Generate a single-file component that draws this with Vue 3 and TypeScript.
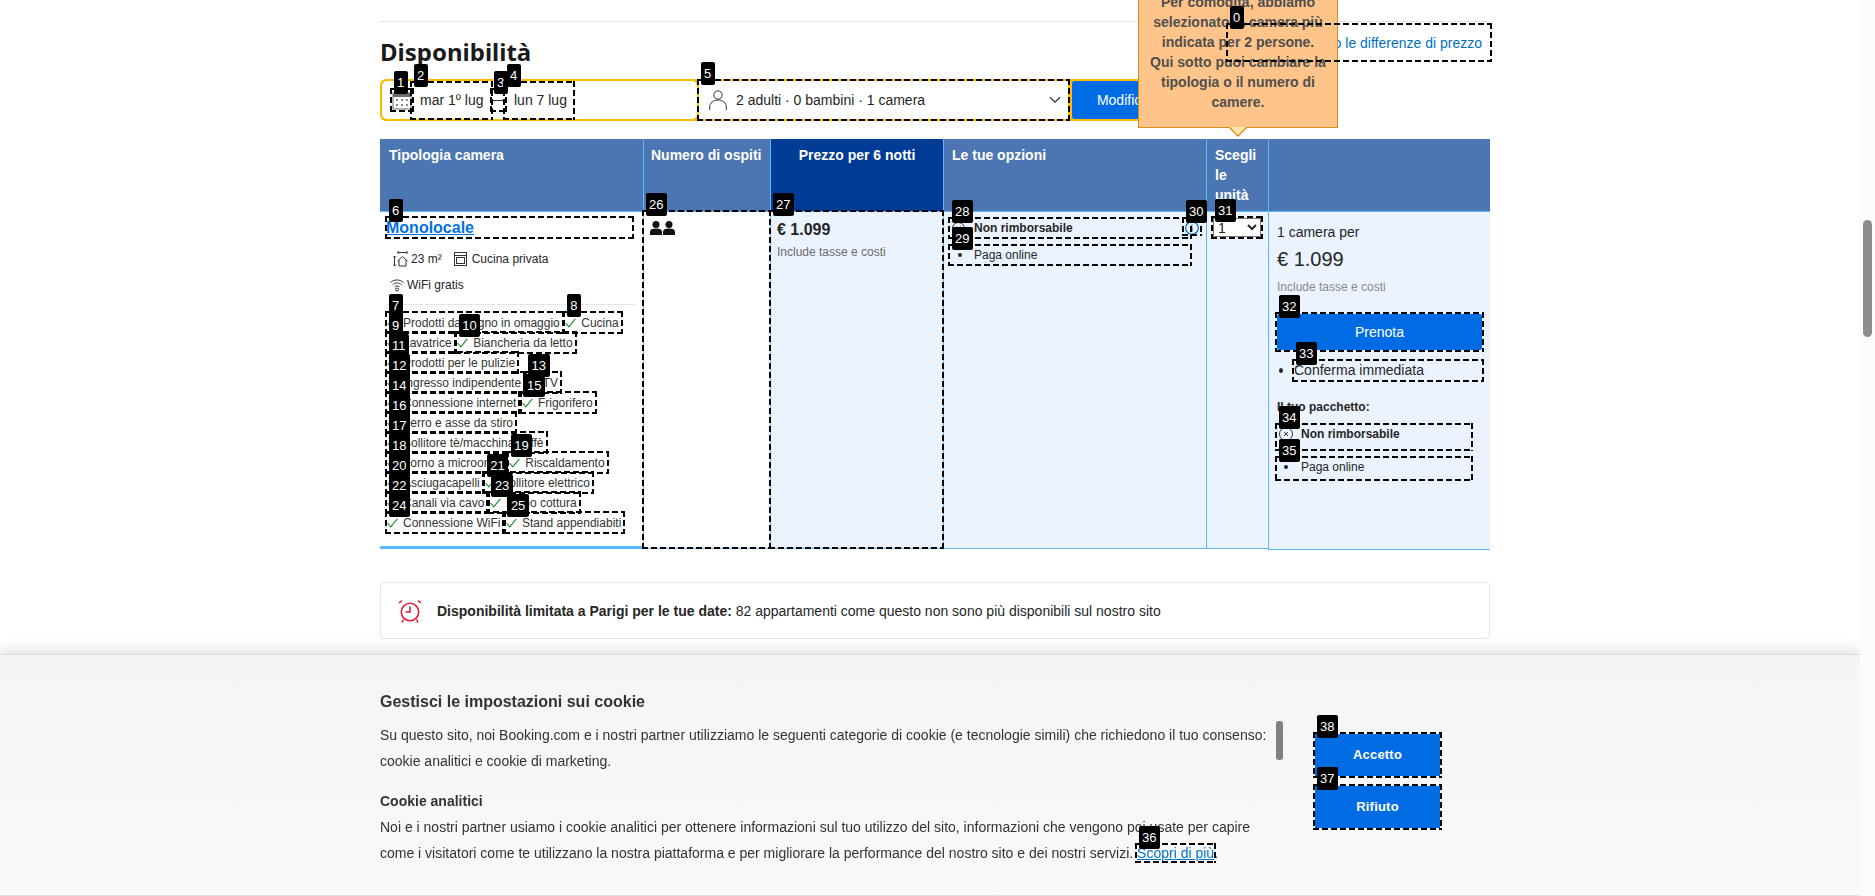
<script setup lang="ts">
interface Amenity {
  id: number
  label: string
}

const amenities: Amenity[] = [
  { id: 7, label: 'Prodotti da bagno in omaggio' },
  { id: 8, label: 'Cucina' },
  { id: 9, label: 'Lavatrice' },
  { id: 10, label: 'Biancheria da letto' },
  { id: 11, label: 'Prodotti per le pulizie' },
  { id: 12, label: 'Ingresso indipendente' },
  { id: 13, label: 'TV' },
  { id: 14, label: 'Connessione internet' },
  { id: 15, label: 'Frigorifero' },
  { id: 16, label: 'Ferro e asse da stiro' },
  { id: 17, label: 'Bollitore tè/macchina caffè' },
  { id: 18, label: 'Forno a microonde' },
  { id: 19, label: 'Riscaldamento' },
  { id: 20, label: 'Asciugacapelli' },
  { id: 21, label: 'Bollitore elettrico' },
  { id: 22, label: 'Canali via cavo' },
  { id: 23, label: 'Piano cottura' },
  { id: 24, label: 'Connessione WiFi' },
  { id: 25, label: 'Stand appendiabiti' },
]
</script>

<template>
  <div class="page">
    <div class="rule"></div>

    <div class="heading-row">
      <h2 class="heading">Disponibilità</h2>
      <a class="price-link marked"><i class="frame"><b>0</b></i>Perché vedo le differenze di prezzo</a>
    </div>

    <div class="search">
      <div class="dates">
        <span class="cal marked">
          <i class="frame"><b>1</b></i>
          <svg width="20" height="20" viewBox="0 0 20 20">
            <rect x="1" y="3" width="18" height="16" fill="#fff" stroke="#6b6b6b" />
            <rect x="1" y="3" width="18" height="4" fill="#6b6b6b" />
            <g fill="#8a8a8a">
              <rect x="4" y="9" width="2" height="2" /><rect x="9" y="9" width="2" height="2" /><rect x="14" y="9" width="2" height="2" />
              <rect x="4" y="14" width="2" height="2" /><rect x="9" y="14" width="2" height="2" /><rect x="14" y="14" width="2" height="2" />
            </g>
          </svg>
        </span>
        <span class="date date--in marked"><i class="frame"><b>2</b></i>mar 1º lug</span>
        <span class="dash marked"><i class="frame"><b>3</b></i></span>
        <span class="date date--out marked"><i class="frame"><b>4</b></i>lun 7 lug</span>
      </div>
      <div class="guests marked">
        <i class="frame"><b>5</b></i>
        <svg class="guests__icon" width="18" height="20" viewBox="0 0 18 20" fill="none" stroke="#333" stroke-width="1">
          <circle cx="9" cy="5" r="4.2" />
          <path d="M.7 20v-3c0-4 3.6-7 8.3-7s8.3 3 8.3 7v3" />
        </svg>
        <span class="guests__label">2 adulti · 0 bambini · 1 camera</span>
        <svg width="12" height="8" viewBox="0 0 12 8" fill="none" stroke="#333" stroke-width="1.3">
          <path d="M1 1.2l5 5 5-5" />
        </svg>
      </div>
      <button class="search__btn">Modifica</button>
    </div>

    <div class="tooltip">
      Per comodità, abbiamo selezionato la camera più indicata per 2 persone.<br />
      Qui sotto puoi cambiare la tipologia o il numero di camere.
      <span class="tooltip__tip"></span>
    </div>

    <div class="table">
      <div class="th">Tipologia camera</div>
      <div class="th th--nowrap">Numero di ospiti</div>
      <div class="th th--price">Prezzo per 6 notti<span class="th__arrow"></span></div>
      <div class="th">Le tue opzioni</div>
      <div class="th">Scegli le unità</div>
      <div class="th"></div>

      <div class="td td--room">
        <div class="room-name marked"><i class="frame"><b>6</b></i><a>Monolocale</a></div>
        <div class="facts facts--first">
          <svg width="15" height="16" viewBox="0 0 15 16" fill="none" stroke="#333">
            <path d="M1.5 5v10M0 6.500l1.500-1.500 1.500 1.500M0 13.500l1.500 1.500 1.500-1.500M5 1.500h9M5 0v3M14 0v3" />
            <path d="M4.500 10l5-4.500 5 4.500M6 9v6h7V9" />
          </svg>
          <span>23 m²</span>
          <svg class="facts__oven" width="13" height="14" viewBox="0 0 13 14" fill="none" stroke="#333">
            <rect x=".5" y=".5" width="12" height="13" />
            <path d="M.5 3.500h12" />
            <rect x="2.500" y="5.500" width="8" height="6" />
          </svg>
          <span>Cucina privata</span>
        </div>
        <div class="facts facts--wifi">
          <svg width="14" height="14" viewBox="0 0 14 14" fill="none" stroke="#333">
            <path d="M.5 4.500c3.600-3.400 9.400-3.400 13 0M2.500 6.700c2.500-2.300 6.500-2.300 9 0M4.500 8.800c1.400-1.200 3.600-1.200 5 0" />
            <circle cx="7" cy="11.500" r="1.500" />
          </svg>
          <span>WiFi gratis</span>
        </div>
        <div class="room-rule"></div>
        <div class="amenities">
          <span v-for="item in amenities" :key="item.id" class="amenity marked">
            <i class="frame"><b>{{ item.id }}</b></i>
            <svg width="11" height="10" viewBox="0 0 11 10" fill="none" stroke="#1d8a2b" stroke-width="1.100">
              <path d="M.6 5l3.200 3.800L10.300.8" />
            </svg>
            <span>{{ item.label }}</span>
          </span>
        </div>
      </div>

      <div class="td td--guests marked">
        <i class="frame frame--cell"><b>26</b></i>
        <svg width="25" height="14" viewBox="0 0 25 14" fill="#111">
          <circle cx="6" cy="3.500" r="3.500" />
          <path d="M0 14v-3c0-2.500 2-3.500 6-3.500s6 1 6 3.500v3z" />
          <circle cx="19" cy="3.500" r="3.500" />
          <path d="M13 14v-3c0-2.500 2-3.500 6-3.500s6 1 6 3.500v3z" />
        </svg>
      </div>

      <div class="td td--blue td--price marked">
        <i class="frame frame--cell"><b>27</b></i>
        <div class="price">€ 1.099</div>
        <div class="taxes">Include tasse e costi</div>
      </div>

      <div class="td td--blue td--options">
        <div class="option-row">
          <div class="option option--main marked">
            <i class="frame"><b>28</b></i>
            <svg class="option__x" width="13" height="13" viewBox="0 0 13 13" fill="none" stroke="#333">
              <circle cx="6.500" cy="6.500" r="6" /><path d="M4.500 4.500l4 4M8.500 4.500l-4 4" />
            </svg>
            <strong>Non rimborsabile</strong>
          </div>
          <span class="info marked">
            <i class="frame"><b>30</b></i>
            <svg width="14" height="14" viewBox="0 0 14 14" fill="none" stroke="#0071c2" stroke-width="1.200">
              <circle cx="7" cy="7" r="6.300" /><path d="M7 6v4.500M7 3.500v1.200" />
            </svg>
          </span>
        </div>
        <div class="option option--sub marked">
          <i class="frame"><b>29</b></i>
          <span class="dot"></span>Paga online
        </div>
      </div>

      <div class="td td--blue td--units">
        <div class="units marked">
          <i class="frame"><b>31</b></i>
          <select class="units__select"><option>1</option></select>
        </div>
      </div>

      <div class="td td--blue td--summary">
        <div class="summary__rooms">1 camera per</div>
        <div class="summary__total">€ 1.099</div>
        <div class="summary__taxes">Include tasse e costi</div>
        <button class="book marked"><i class="frame"><b>32</b></i>Prenota</button>
        <div class="confirm">
          <span class="dot dot--big"></span>
          <span class="confirm__text marked"><i class="frame"><b>33</b></i>Conferma immediata</span>
        </div>
        <div class="package-title">Il tuo pacchetto:</div>
        <div class="package package--main marked">
          <i class="frame"><b>34</b></i>
          <svg width="14" height="14" viewBox="0 0 14 14" fill="none" stroke="#333">
            <circle cx="7" cy="7" r="6.500" /><path d="M5 5l4 4M9 5l-4 4" />
          </svg>
          <strong>Non rimborsabile</strong>
        </div>
        <div class="package package--sub marked">
          <i class="frame"><b>35</b></i>
          <span class="dot"></span>Paga online
        </div>
      </div>
    </div>

    <div class="notice">
      <svg width="24" height="24" viewBox="0 0 24 24" fill="none" stroke="#e21c3c" stroke-width="1.600">
        <circle cx="12" cy="13" r="8.700" />
        <path d="M12 7.500V13H7.500M5.500 20.500L4 23.500M18.500 20.500l1.500 3M1 4l3-2.500M23 4l-3-2.500" />
      </svg>
      <p class="notice__text">
        <strong>Disponibilità limitata a Parigi per le tue date:</strong>
        82 appartamenti come questo non sono più disponibili sul nostro sito
      </p>
    </div>
  </div>

  <div class="cookie">
    <div class="cookie__inner">
      <div class="cookie__copy">
        <h3 class="cookie__title">Gestisci le impostazioni sui cookie</h3>
        <p class="cookie__text">
          Su questo sito, noi Booking.com e i nostri partner utilizziamo le seguenti categorie di cookie (e tecnologie simili) che richiedono il tuo consenso: cookie analitici e cookie di marketing.
        </p>
        <h4 class="cookie__sub">Cookie analitici</h4>
        <p class="cookie__text">
          Noi e i nostri partner usiamo i cookie analitici per ottenere informazioni sul tuo utilizzo del sito, informazioni che vengono poi usate per capire come i visitatori come te utilizzano la nostra piattaforma e per migliorare la performance del nostro sito e dei nostri servizi.
          <a class="cookie__link marked"><i class="frame"><b>36</b></i>Scopri di più</a>.
        </p>
      </div>
      <div class="cookie__thumb"></div>
      <div class="cookie__actions">
        <button class="cookie__btn marked"><i class="frame"><b>38</b></i>Accetto</button>
        <button class="cookie__btn marked"><i class="frame"><b>37</b></i>Rifiuto</button>
      </div>
    </div>
  </div>

  <div class="scrollbar"><div class="scrollbar__thumb"></div></div>
</template>

<style>
html,
body {
  height: 100%;
  overflow: hidden;
  background: #fff;
}
</style>

<style scoped>
.page {
  position: relative;
  width: 1110px;
  margin-left: 380px;
  font-family: "Liberation Sans", Arial, sans-serif;
  color: #262626;
  font-size: 14px;
  padding-top: 21px;
}

.marked {
  position: relative;
}

/* dashed box, 6 on 3 off, drawn over everything below it */
.frame {
  position: absolute;
  inset: -2px;
  z-index: 50;
  pointer-events: none;
  font-style: normal;
  background:
    repeating-linear-gradient(90deg, #000 0 6px, transparent 6px 9px) top / 100% 2px no-repeat,
    repeating-linear-gradient(90deg, #000 0 6px, transparent 6px 9px) bottom / 100% 2px no-repeat,
    repeating-linear-gradient(180deg, #000 0 6px, transparent 6px 9px) left / 2px 100% no-repeat,
    repeating-linear-gradient(180deg, #000 0 6px, transparent 6px 9px) right / 2px 100% no-repeat;
}

.frame--cell {
  inset: -2px -1px -1px -2px;
}

.frame b {
  position: absolute;
  left: 3.5px;
  top: -17px;
  height: 23px;
  padding: 0 3.5px;
  background: #000;
  color: #fff;
  border-radius: 2px;
  font: 400 13px/23px "Liberation Sans", Arial, sans-serif;
  letter-spacing: 0;
}

.rule {
  height: 1px;
  background: #e6e6e6;
}

.heading-row {
  display: flex;
  justify-content: space-between;
  align-items: flex-start;
  height: 57px;
  padding-top: 3px;
  box-sizing: border-box;
}

.heading {
  margin: 10px 0 0;
  font: 700 24px/34px "Noto Sans", "Open Sans", sans-serif;
  color: #1a1a1a;
}

.price-link {
  display: block;
  width: 262px;
  height: 35px;
  box-sizing: border-box;
  text-align: right;
  padding-right: 8px;
  font-size: 14px;
  line-height: 36px;
  color: #0071c2;
}

.search {
  display: flex;
  gap: 2px;
  width: fit-content;
  height: 42px;
  box-sizing: border-box;
  padding: 2px;
  background: #febb02;
  border-radius: 6px;
}

.dates {
  display: flex;
  align-items: center;
  width: 315px;
  box-sizing: border-box;
  padding-left: 10px;
  background: #fff;
  border-radius: 5px;
}

.cal {
  display: block;
  width: 20px;
  height: 20px;
}

.cal svg {
  display: block;
}

.date {
  display: block;
  height: 35px;
  line-height: 35px;
  box-sizing: border-box;
}

.date--in {
  width: 79px;
  padding-left: 8px;
}

.date--out {
  width: 68px;
  padding-left: 9px;
}

.dash {
  display: block;
  width: 13px;
  height: 20px;
  margin-left: 1px;
  background: linear-gradient(#333, #333) center / 13px 1px no-repeat;
}

.guests {
  display: flex;
  align-items: center;
  width: 369px;
  box-sizing: border-box;
  padding: 0 7px 0 10px;
  background: #fff;
}

.guests__label {
  flex: 1;
  margin-left: 9px;
}

.search__btn {
  width: 102px;
  margin-left: 2px;
  border: 0;
  border-radius: 3px;
  background: #006ce4;
  color: #fff;
  font: 400 14px "Liberation Sans", Arial, sans-serif;
}

.tooltip {
  position: absolute;
  left: 758px;
  top: -25px;
  width: 200px;
  box-sizing: border-box;
  padding: 16px 8px 15px;
  background: #ffc48a;
  border: 1px solid #d98f1b;
  text-align: center;
  font-weight: 700;
  font-size: 14px;
  line-height: 20px;
  color: #4f4f4f;
  z-index: 20;
}

.tooltip__tip {
  position: absolute;
  left: 50%;
  top: 100%;
  margin-left: -9px;
  margin-top: 1px;
  border: solid transparent;
  border-width: 9px 9px 0;
  border-top-color: #d98f1b;
}

.tooltip__tip::after {
  content: "";
  position: absolute;
  left: -8px;
  top: -10px;
  border: solid transparent;
  border-width: 8px 8px 0;
  border-top-color: #ffe6a8;
}

.table {
  display: grid;
  grid-template-columns: 263px 127px 173px 263px 62px 222px;
  grid-template-rows: 73px 337px;
  margin-top: 18px;
}

.th {
  position: relative;
  background: #4c76b2;
  color: #fff;
  font-weight: 700;
  font-size: 14px;
  line-height: 20px;
  padding: 6px 8px 0;
  border-left: 1px solid #5bbaff;
  border-bottom: 1px solid #5bbaff;
  box-sizing: border-box;
  overflow: hidden;
}

.th:first-child {
  padding-left: 9px;
  border-left: 0;
}

.th--nowrap {
  white-space: nowrap;
  padding-left: 7px;
  padding-right: 0;
}

.th--price {
  background: #003b95;
  text-align: center;
  overflow: visible;
}

.th__arrow {
  position: absolute;
  left: 50%;
  bottom: -10px;
  margin-left: -9px;
  border: solid transparent;
  border-width: 9px 9px 0;
  border-top-color: #003b95;
}

.td {
  box-sizing: border-box;
  border-left: 1px solid #5bbaff;
  border-bottom: 1px solid #5bbaff;
}

.td--blue {
  background: #ebf3ff;
}

.td--room {
  border-left: 0;
  border-bottom: 3px solid #5bbaff;
  padding: 6px 11px 0 7px;
  font-size: 12px;
}

.room-name {
  height: 19px;
  line-height: 19px;
  font-size: 16px;
  font-weight: 700;
}

.room-name a {
  margin-left: -1px;
  color: #0071e2;
  text-decoration: underline;
}

.facts {
  display: flex;
  align-items: center;
  height: 16px;
}

.facts--first {
  margin-top: 14px;
  padding-left: 6px;
  gap: 3px;
}

.facts__oven {
  margin-left: 9px;
  margin-right: 2px;
}

.facts--wifi {
  margin-top: 10px;
  padding-left: 3px;
  gap: 3px;
}

.room-rule {
  height: 1px;
  margin: 11px -3px 0 -2px;
  background: #e6e6e6;
}

.amenities {
  display: flex;
  flex-wrap: wrap;
  gap: 1px 3.5px;
  margin-top: 8px;
}

.amenity {
  display: inline-flex;
  align-items: center;
  height: 19px;
  padding-right: 2px;
  white-space: nowrap;
  color: #333;
}

.amenity svg {
  margin-right: 5px;
}

.td--guests {
  padding: 9px 0 0 6px;
}

.td--price {
  padding: 8px 0 0 6px;
}

.price {
  font-size: 16px;
  font-weight: 700;
  line-height: 20px;
}

.taxes {
  margin-top: 5px;
  font-size: 12px;
  line-height: 14px;
  color: #6b6b6b;
}

.td--options {
  padding: 7px 0 0 6px;
  font-size: 12px;
}

.option-row {
  display: flex;
  align-items: flex-start;
}

.option {
  display: flex;
  align-items: center;
  width: 240px;
  height: 18px;
  box-sizing: border-box;
  flex: none;
}

.option__x {
  margin: 0 9px 0 2px;
}

.option--sub {
  margin-top: 9px;
  padding-left: 8px;
}

.dot {
  display: block;
  width: 4px;
  height: 4px;
  border-radius: 50%;
  background: #262626;
  margin-right: 12px;
}

.info {
  display: block;
  width: 16px;
  height: 15px;
  margin-left: -6px;
  text-align: center;
}

.info svg {
  display: block;
  margin: 2px 0 0 1px;
}

.td--units {
  padding: 6px 0 0 6px;
}

.units {
  width: 48px;
  height: 19px;
}

.units__select {
  display: block;
  width: 48px;
  height: 19px;
  box-sizing: border-box;
  background: #fff;
  border: 1px solid #767676;
  border-radius: 0;
  font: 400 14px "Liberation Sans", Arial, sans-serif;
  color: #262626;
  padding: 0;
}

.td--summary {
  margin-bottom: -1px;
  padding: 10px 8px 0 8px;
  font-size: 14px;
}

.summary__rooms {
  line-height: 20px;
}

.summary__total {
  margin-top: 5px;
  font-size: 20px;
  line-height: 24px;
}

.summary__taxes {
  margin-top: 9px;
  font-size: 12px;
  line-height: 14px;
  color: #8a8a8a;
}

.book {
  display: block;
  width: 205px;
  height: 36px;
  margin-top: 20px;
  border: 0;
  border-radius: 2px;
  background: #006ce4;
  color: #fff;
  font: 400 14px "Liberation Sans", Arial, sans-serif;
}

.confirm {
  display: flex;
  align-items: center;
  height: 19px;
  margin-top: 11px;
}

.dot--big {
  width: 5px;
  height: 5px;
  margin: 0 11px 0 2px;
}

.confirm__text {
  display: block;
  width: 188px;
  line-height: 19px;
  flex: none;
}

.package-title {
  margin-top: 20px;
  font-size: 12px;
  font-weight: 700;
  line-height: 14px;
}

.package {
  display: flex;
  align-items: center;
  width: 194px;
  box-sizing: border-box;
  font-size: 12px;
}

.package--main {
  height: 24px;
  margin-top: 11px;
  padding: 0 0 6px 2px;
}

.package--main svg {
  margin-right: 8px;
}

.package--sub {
  height: 21px;
  margin-top: 9px;
  padding: 0 0 3px 7px;
}

.package--sub .dot {
  margin-right: 13px;
}

.notice {
  display: flex;
  align-items: center;
  height: 57px;
  margin-top: 33px;
  padding-left: 17px;
  box-sizing: border-box;
  border: 1px solid #e6e6e6;
  border-radius: 3px;
}

.notice__text {
  margin: 0 0 0 15px;
  color: #262626;
}

.cookie {
  position: fixed;
  left: 0;
  bottom: 0;
  width: 1860px;
  height: 242px;
  box-sizing: border-box;
  background: linear-gradient(#f5f5f5, #f9f9f9);
  border-top: 1px solid #d9d9d9;
  border-bottom: 1px solid #e2e2e2;
  box-shadow: 0 -3px 14px rgba(0, 0, 0, 0.14);
  font-family: "Liberation Sans", Arial, sans-serif;
  color: #333;
  z-index: 30;
}

.cookie__inner {
  display: flex;
  align-items: flex-start;
  margin-left: 380px;
  padding-top: 37px;
}

.cookie__copy {
  width: 890px;
}

.cookie__title {
  margin: 0;
  font-size: 16px;
  font-weight: 700;
  line-height: 20px;
}

.cookie__text {
  margin: 10px 0 0;
  font-size: 14px;
  line-height: 26px;
}

.cookie__sub {
  margin: 14px 0 0;
  font-size: 14px;
  font-weight: 700;
  line-height: 26px;
}

.cookie__sub + .cookie__text {
  margin-top: 0;
}

.cookie__link {
  color: #0077cc;
  text-decoration: underline;
}

.cookie__thumb {
  flex: none;
  width: 7px;
  height: 39px;
  margin: 29px 0 0 6px;
  border-radius: 3px;
  background: #808080;
}

.cookie__actions {
  display: flex;
  flex-direction: column;
  gap: 10px;
  margin: 42px 0 0 32px;
}

.cookie__btn {
  display: block;
  width: 125px;
  height: 42px;
  border: 0;
  padding: 0 0 1px;
  background: #006ce4;
  color: #fff;
  font: 700 13px "Liberation Sans", Arial, sans-serif;
  letter-spacing: 0.2px;
}

.scrollbar {
  position: fixed;
  top: 0;
  right: 0;
  bottom: 0;
  width: 15px;
  background: #fbfbfb;
  z-index: 40;
}

.scrollbar__thumb {
  width: 9px;
  height: 117px;
  margin: 220px 0 0 3px;
  border-radius: 5px;
  background: #8c8c8c;
}
</style>
